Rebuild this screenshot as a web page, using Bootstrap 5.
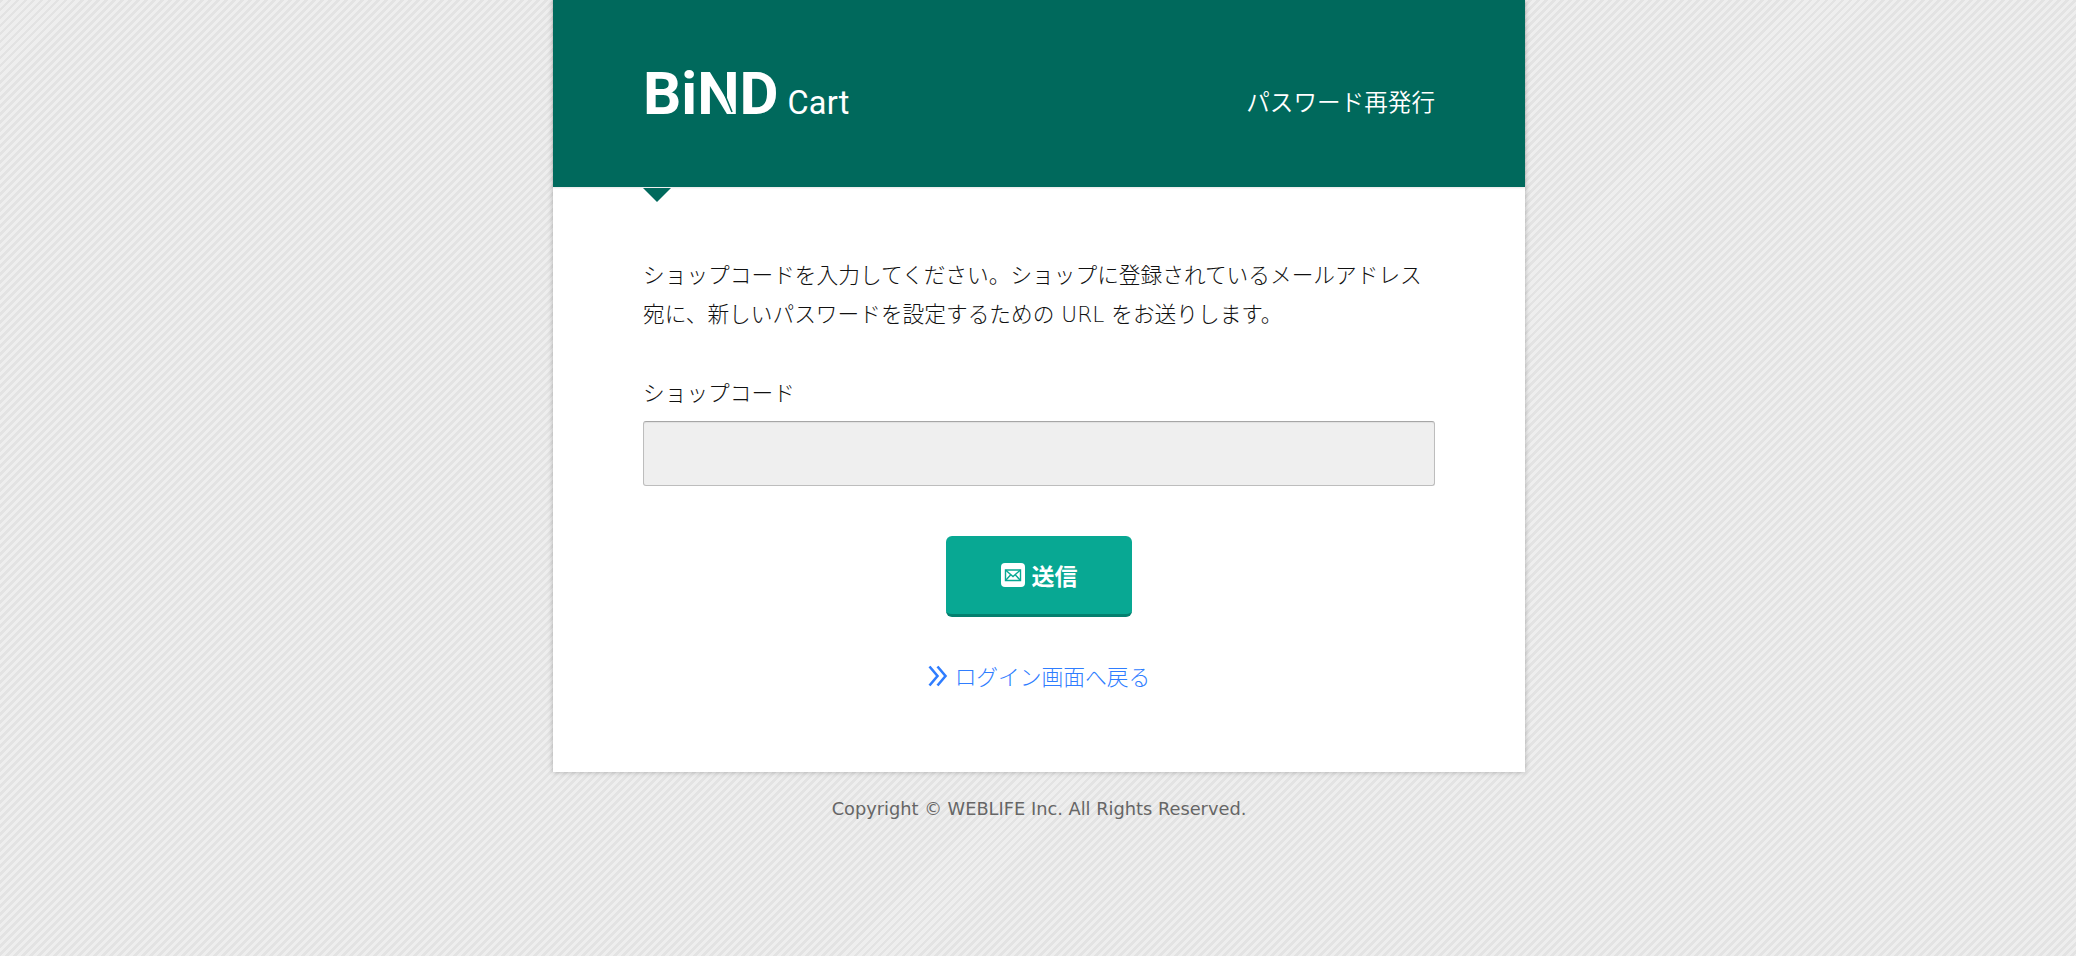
<!DOCTYPE html>
<html lang="ja">
<head>
<meta charset="utf-8">
<title>パスワード再発行</title>
<link href="https://cdn.jsdelivr.net/npm/bootstrap@5.3.0/dist/css/bootstrap.min.css" rel="stylesheet">
<style>
html,body{height:100%}
body{font-family:"DejaVu Sans","Noto Sans CJK JP",sans-serif;color:#333;min-height:956px;overflow:hidden;
  background-color:#e9e9e9;background-image:repeating-linear-gradient(135deg,#e3e3e3 0,#e3e3e3 2.8px,#eeeeee 2.8px,#eeeeee 5.66px)}
.sheet{width:972px;margin-left:553px;background:#fff;box-shadow:0 0 5px rgba(0,0,0,.28)}
.sheet-head{height:187px;background:#00695c;padding:0 90px;color:#fff;position:relative;box-shadow:0 1px 2px rgba(0,0,0,.1)}
.sheet-head::after{content:"";position:absolute;left:90px;top:188px;border-style:solid;border-width:14px 14px 0;border-color:#00695c transparent transparent}
.logo-wrap{padding-top:64px;line-height:1;white-space:nowrap}
.logo-main{font-family:Roboto,sans-serif;font-weight:700;font-size:60px;letter-spacing:0;line-height:1;position:relative}
.logo-slit{position:absolute;left:58px;top:12px;width:34px;height:44px}
.logo-sub{font-family:Roboto,sans-serif;font-weight:400;font-size:32.5px;margin-left:9px;letter-spacing:.2px;line-height:1}
.head-title{font-family:"Noto Sans CJK JP",sans-serif;font-weight:350;font-size:23.6px;line-height:1;padding-top:16px}
.sheet-body{padding:69px 90px 0;height:585px}
.intro{font-family:"DejaVu Sans","Noto Sans CJK JP",sans-serif;font-weight:300;font-size:21.7px;line-height:39px;margin:0 0 43px;color:#111}
.field-label{font-family:"Noto Sans CJK JP",sans-serif;font-weight:300;font-size:21.7px;line-height:30px;margin-bottom:14px;display:block;color:#111}
.field-input{height:65px;background:#efefef;border:1px solid #bdbdbd;border-top-color:#a6a6a6;border-radius:3px;box-shadow:inset 0 1px 1px rgba(0,0,0,.06)}
.field-input:focus{background:#efefef}
.send-btn{width:186px;height:81px;margin-top:50px;background:#08a893;border:0;border-bottom:3px solid #04806f;border-radius:6px;color:#fff;font-family:"Noto Sans CJK JP",sans-serif;font-weight:700;font-size:23px;gap:7px}
.send-btn:hover{background:#08a893;color:#fff;border-bottom-color:#04806f}
.back-link{margin-top:44px;color:#2f7dff;font-family:"Noto Sans CJK JP",sans-serif;font-weight:300;font-size:21.75px;line-height:30px;gap:7px;text-decoration:none}
.copy{font-size:17.8px;line-height:24px;color:#666;text-align:center;width:972px;margin-left:553px;padding-top:25px}
</style>
</head>
<body>
<div class="sheet">
  <div class="sheet-head d-flex justify-content-between">
    <div class="logo-wrap d-flex align-items-baseline"><span class="logo-main">BiND<svg class="logo-slit" viewBox="0 0 34 44" aria-hidden="true"><path d="M17 2 31 36" stroke="#00695c" stroke-width="1.600" fill="none"/></svg></span><span class="logo-sub">Cart</span></div>
    <div class="head-title align-self-center">パスワード再発行</div>
  </div>
  <div class="sheet-body">
    <p class="intro">ショップコードを入力してください。ショップに登録されているメールアドレス宛に、新しいパスワードを設定するための URL をお送りします。</p>
    <form class="d-flex flex-column">
      <label class="field-label" for="shopcode">ショップコード</label>
      <input id="shopcode" class="form-control field-input" type="text">
      <div class="d-flex justify-content-center">
        <button type="button" class="btn send-btn d-inline-flex align-items-center justify-content-center">
          <svg width="24" height="24" viewBox="0 0 24 24" aria-hidden="true"><rect width="24" height="24" rx="4" fill="#fff"/><path d="M4.500 7h15v10.500h-15z" fill="none" stroke="#08a893" stroke-width="1.400"/><path d="M4.500 7 12 13.500 19.500 7M4.500 17.500l5.500-6M19.500 17.500 14 11.500" fill="none" stroke="#08a893" stroke-width="1.400"/></svg>
          <span>送信</span>
        </button>
      </div>
      <div class="d-flex justify-content-center">
        <a href="#" class="back-link d-inline-flex align-items-center">
          <svg width="20" height="22" viewBox="0 0 20 22" aria-hidden="true"><path d="M1.500 1.500 9.500 11l-8 9.500M9.500 1.500 17.500 11l-8 9.500" fill="none" stroke="#2f7dff" stroke-width="2.600"/></svg>
          <span>ログイン画面へ戻る</span>
        </a>
      </div>
    </form>
  </div>
</div>
<div class="copy">Copyright © WEBLIFE Inc. All Rights Reserved.</div>
<script src="https://cdn.jsdelivr.net/npm/bootstrap@5.3.0/dist/js/bootstrap.bundle.min.js"></script>
</body>
</html>
